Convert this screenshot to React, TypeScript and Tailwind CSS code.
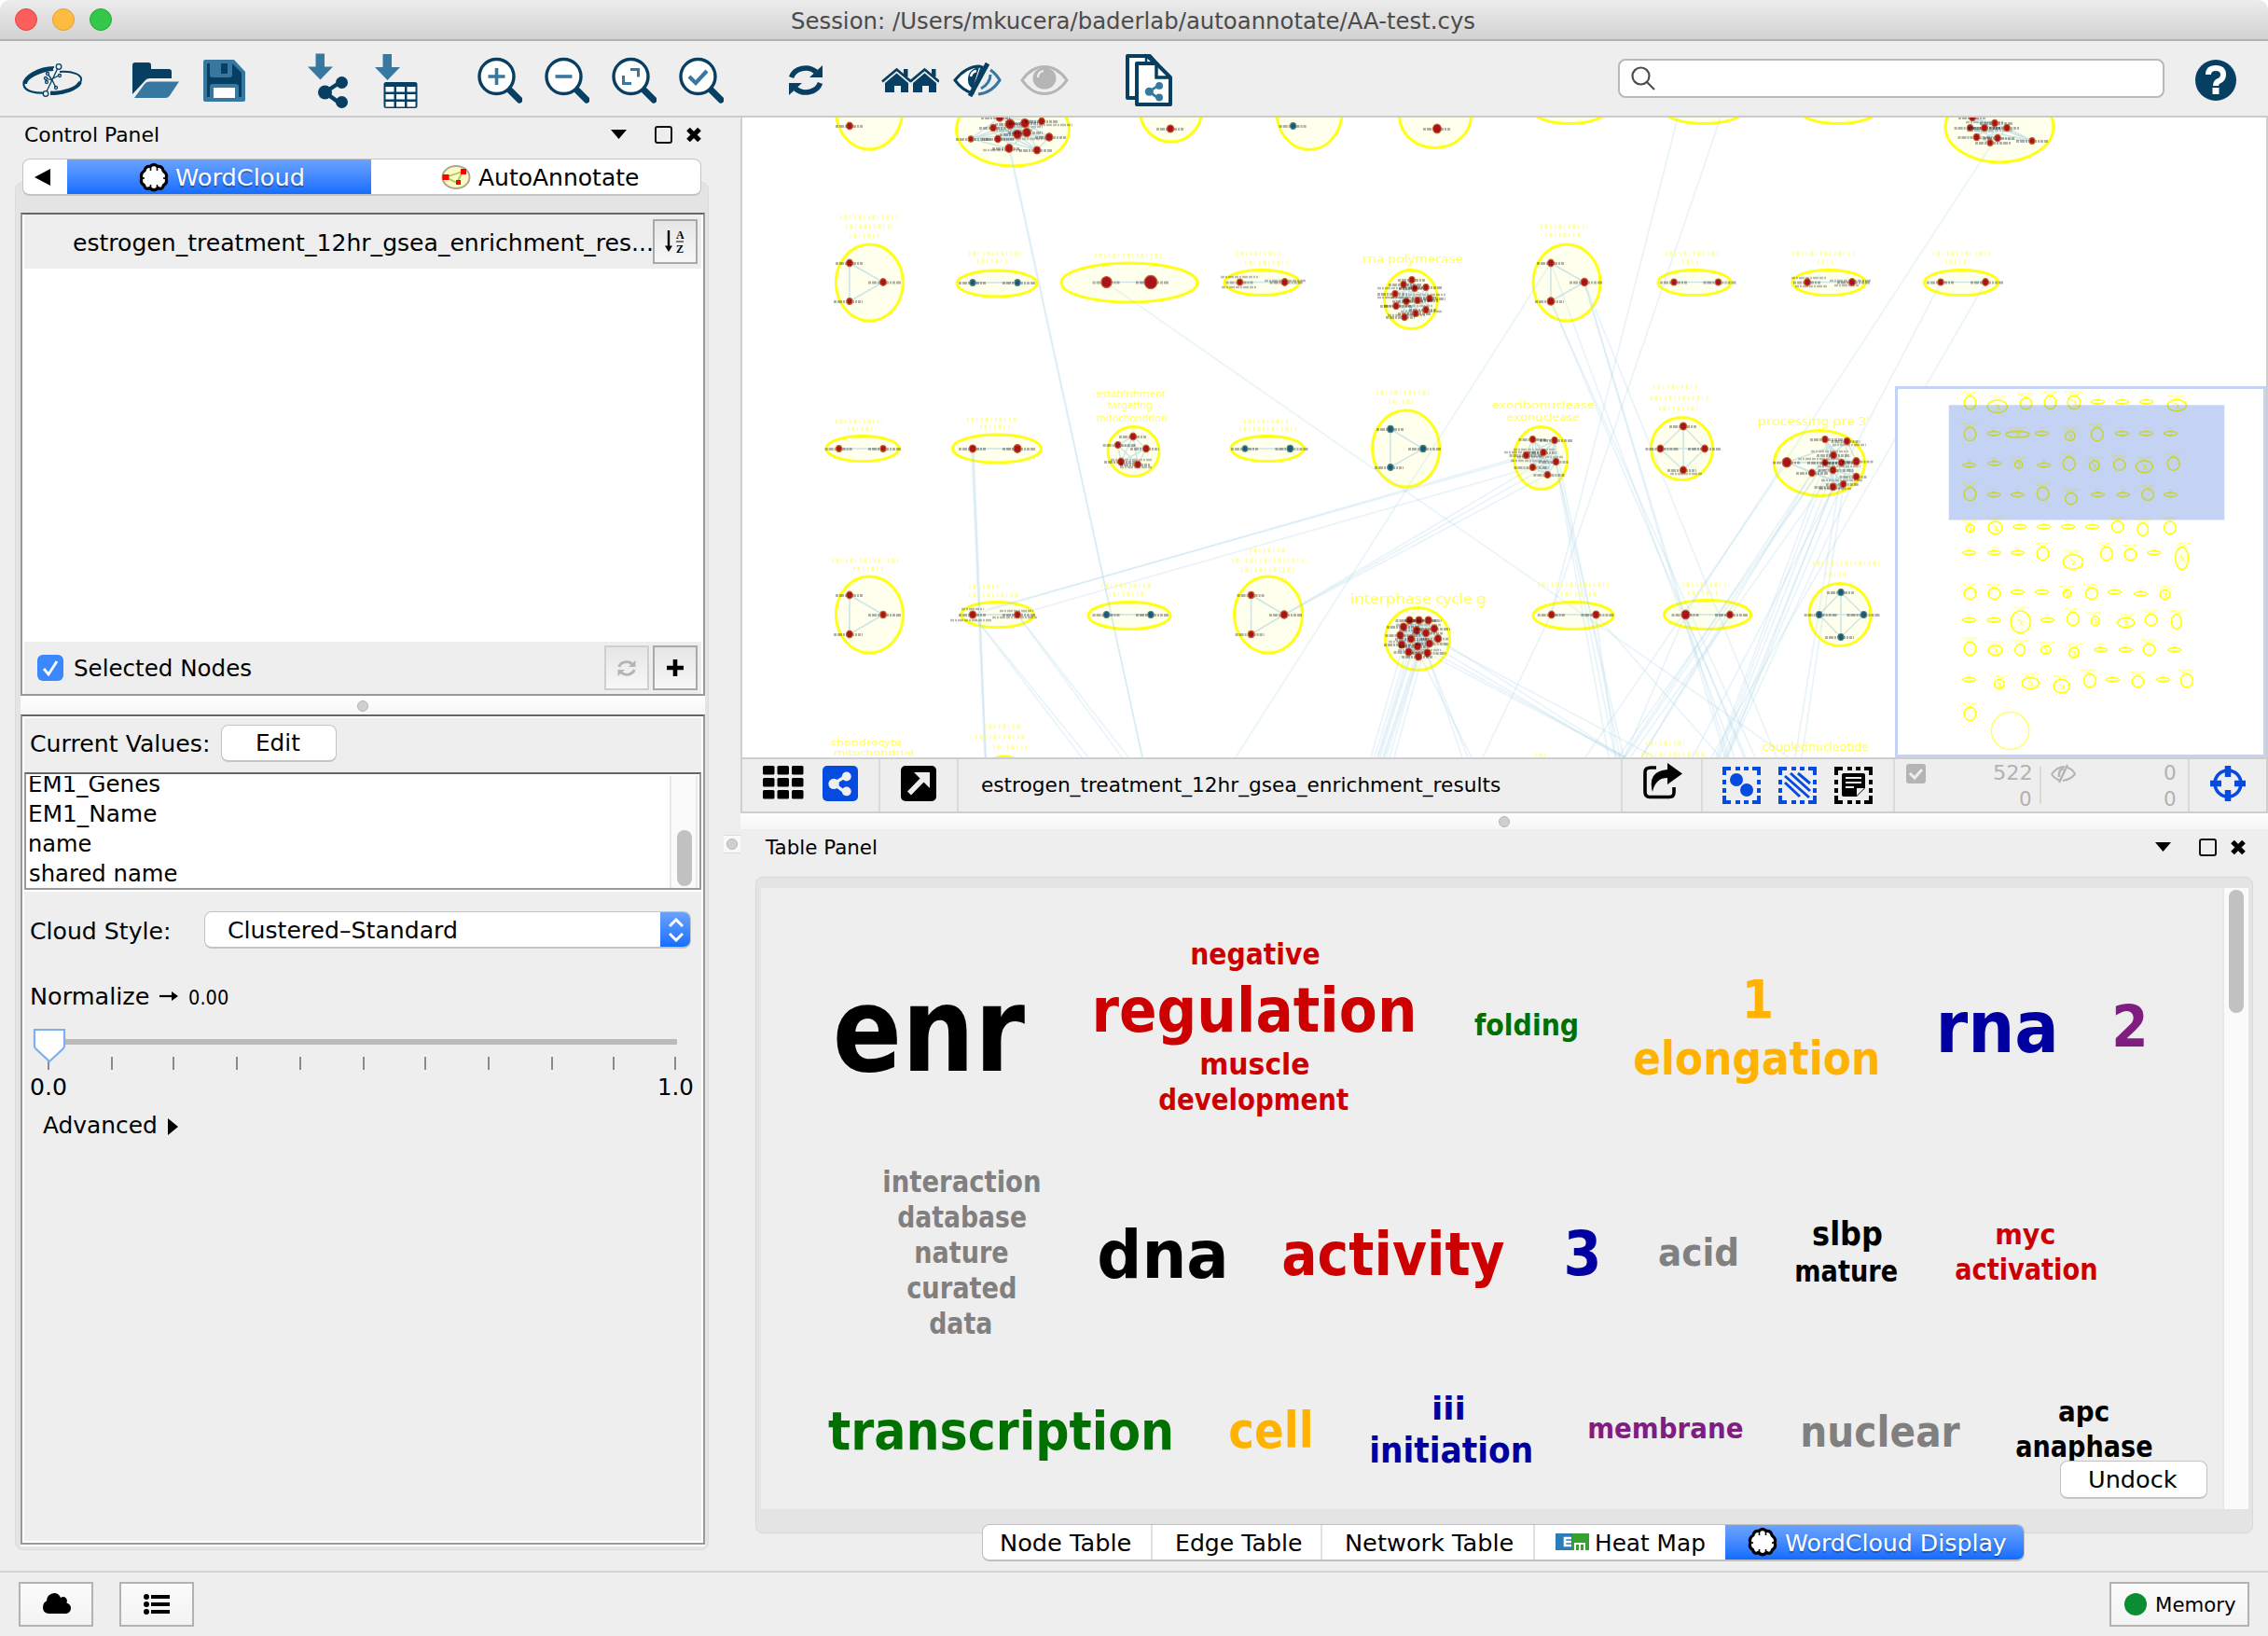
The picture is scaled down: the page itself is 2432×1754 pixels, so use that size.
import React, { useLayoutEffect, useRef } from "react";

const DARK = "#073f62";
const BLUE = "#3878a0";

/* Single line of text whose ink is stretched to exactly w pixels. */
function Fit({ children, w, className = "" }: { children: string; w: number; className?: string }) {
  const ref = useRef<HTMLSpanElement>(null);
  useLayoutEffect(() => {
    const el = ref.current;
    const ctx = document.createElement("canvas").getContext("2d");
    if (!el || !ctx) return;
    const cs = getComputedStyle(el);
    ctx.font = `${cs.fontWeight} ${cs.fontSize} ${cs.fontFamily}`;
    const m = ctx.measureText(children);
    const s = w / (m.actualBoundingBoxLeft + m.actualBoundingBoxRight);
    el.style.transform = `translate(${m.actualBoundingBoxLeft * s}px, 0.042em) scaleX(${s})`;
  }, [children, w]);
  return (
    <span className={`inline-block shrink-0 whitespace-pre ${className}`} style={{ width: w }}>
      <span ref={ref} className="inline-block origin-left">
        {children}
      </span>
    </span>
  );
}

type GProps = { x: number; y: number; w: number; h: number; className?: string; children: React.ReactNode };
function Glyph({ x, y, w, h, className = "", children }: GProps) {
  return (
    <svg viewBox={`${x} ${y} ${w} ${h}`} width={w} height={h} className={`shrink-0 ${className}`} fill="none">
      {children}
    </svg>
  );
}

function Share({ c }: { c: string }) {
  return (
    <g fill={c} stroke={c}>
      <path d="M23 7 L8 17 L23 28" fill="none" strokeWidth="4.5" />
      <circle cx="26" cy="6.5" r="6.5" stroke="none" />
      <circle cx="8" cy="17" r="7.5" stroke="none" />
      <circle cx="26" cy="27.5" r="6.5" stroke="none" />
    </g>
  );
}

function Lens({ className, children }: { className: string; children: React.ReactNode }) {
  return (
    <Glyph x={0} y={0} w={48} h={50} className={className}>
      <path d="M33 34 L45 46" stroke={DARK} strokeWidth="7" strokeLinecap="round" />
      <circle cx="20.5" cy="21" r="18.5" fill="#fff" stroke={DARK} strokeWidth="3.4" />
      <g stroke={BLUE} strokeWidth="3.6">{children}</g>
    </Glyph>
  );
}

function CloudIcon({ className }: { className: string }) {
  return (
    <svg viewBox="0 0 32 32" width="32" height="32" className={`shrink-0 ${className}`}>
      <path
        d="M12 4.500 Q16 0.500 20 4.500 Q25 4 26 9 Q31 13 29 17 Q31 22 26.500 24.500 Q25 30 20.500 27.500 Q16 32 11.500 27.500 Q7 30 5.500 24.500 Q1 22 3 17 Q1 12 6 9 Q7 4 12 4.500Z"
        fill="#fff"
        stroke="#000"
        strokeWidth="3.200"
        strokeLinejoin="round"
      />
      <path d="M12.500 3v6M19.500 3v6M12.500 29v-5M19.500 29v-5M3 17h3M29 17h-3" stroke="#000" strokeWidth="1.600" />
    </svg>
  );
}

function Sync({ c }: { c: string }) {
  return (
    <g stroke={c} strokeWidth="5.6" fill="none">
      <path d="M3.5 15 A16 14 0 0 1 30 9" />
      <path d="M34.500 21 A16 14 0 0 1 8 27" />
      <path d="M37 2 V15 H23Z" fill={c} stroke="none" />
      <path d="M1 34 V21 H15Z" fill={c} stroke="none" />
    </g>
  );
}

function WindowButtons() {
  return (
    <div className="flex items-center">
      <svg width="17" height="10" className="-mt-[1px]">
        <path d="M0 0h17l-8.500 10z" />
      </svg>
      <div className="ml-[30px] h-[19px] w-[19px] rounded-[3px] border-2 border-[#111]" />
      <svg width="18" height="17" viewBox="0 0 18 17" className="ml-[14px]">
        <path d="M3 2.500l12 12M15 2.500l-12 12" stroke="#000" strokeWidth="5.200" />
      </svg>
    </div>
  );
}

function TitleBar() {
  return (
    <div className="relative flex h-[44px] shrink-0 items-center rounded-t-[10px] border-b-2 border-[#b1b1b1] bg-linear-to-b from-[#ececec] to-[#d2d2d2] pl-[16px]">
      <div className="flex gap-[16px]">
        <div className="h-6 w-6 rounded-full border border-[#e2463f] bg-[#fc5f5b]" />
        <div className="h-6 w-6 rounded-full border border-[#dfa035] bg-[#fdbc40]" />
        <div className="h-6 w-6 rounded-full border border-[#27a835] bg-[#34c84a]" />
      </div>
      <Fit w={732} className="ml-[729px] mt-[2px] text-[25px] leading-[44px] text-[#4b4b4b]">
        Session: /Users/mkucera/baderlab/autoannotate/AA-test.cys
      </Fit>
    </div>
  );
}

function Toolbar() {
  return (
    <div className="flex h-[82px] shrink-0 items-start border-b-2 border-[#cbcbcb] bg-[#eeeeee]">
      <Glyph x={24} y={68} w={64} h={36} className="ml-[24px] mt-[24px]">
        <path d="M58 72 C42 72 24 82 25.500 91 C26.500 98 38 100.500 51 99.500" stroke={DARK} strokeWidth="2.2" />
        <path d="M57 74 C42 75 27 83 27 90" stroke={DARK} strokeWidth="4" />
        <path d="M64 77 C78 76 88 80 87 86 C85 94 68 101 54 101" stroke={DARK} strokeWidth="2" />
        <path d="M86 88 C83 95 68 100.500 54 99.500" stroke={DARK} strokeWidth="4" />
        <path d="M62 73 L50 98 M56 86 L49 84 M56 86 L51 79 M56 86 L60 94 M57 84 L63 81" stroke={DARK} strokeWidth="1.300" />
        <g fill="#eee" stroke={DARK} strokeWidth="1.300">
          <circle cx="63" cy="71.500" r="2.800" />
          <circle cx="49" cy="100.500" r="2.800" />
          <circle cx="51" cy="79" r="1.500" />
          <circle cx="49" cy="84" r="1.500" />
          <circle cx="64" cy="81" r="1.500" />
          <circle cx="60" cy="94" r="1.500" />
          <circle cx="50" cy="88" r="1.500" />
        </g>
      </Glyph>
      <Glyph x={142} y={66} w={50} h={40} className="ml-[54px] mt-[22px]">
        <path d="M142 101V70q0-3 3-3h14q3 0 3 3v4h19q3 0 3 3v7h-23q-4 0-6 3z" fill={DARK} />
        <path d="M144 105l11-15q1.500-2.500 5-2.500h32l-10 15q-1.500 2.500-5 2.500z" fill={BLUE} />
      </Glyph>
      <Glyph x={218} y={63} w={46} h={46} className="ml-[26px] mt-[19px]">
        <path d="M220 64h31l12 13v30q0 2-2 2h-41q-2 0-2-2V66q0-2 2-2z" fill={BLUE} />
        <path d="M222 68h3v12q0 3 3 3h18q3 0 3-3v-12l10 10v26h-3V93q0-3-3-3h-25q-3 0-3 3v11h-3z" fill={DARK} />
        <rect x="237" y="68" width="7" height="11" fill={DARK} />
        <rect x="229" y="94" width="23" height="11" fill="#fff" />
      </Glyph>
      <Glyph x={330} y={56} w={46} h={62} className="ml-[66px] mt-[12px]">
        <path d="M338.500 57.500h9.500v14h9l-13.500 14-13.500-14h8.500z" fill={BLUE} />
        <g transform="translate(340.500 82)">
          <Share c={DARK} />
        </g>
      </Glyph>
      <Glyph x={400} y={56} w={48} h={62} className="ml-[24px] mt-[12px]">
        <path d="M410.500 58h9.500v14h9l-13.500 14-13.500-14h8.500z" fill={BLUE} />
        <rect x="411.500" y="88" width="36" height="28" rx="2.500" fill={DARK} />
        <g fill="#fff">
          {[93, 101, 109].map((y) => [413.5, 425, 436.5].map((x) => <rect key={`${x}-${y}`} x={x} y={y} width="9" height="5.500" />))}
        </g>
      </Glyph>
      <Lens className="ml-[64px] mt-[17px]">
        <path d="M20.500 12v18M11.500 21h18" />
      </Lens>
      <Lens className="ml-[24px] mt-[17px]">
        <path d="M11.500 21h18" />
      </Lens>
      <Lens className="ml-[24px] mt-[17px]">
        <path d="M20 13.500h8.500v8M12.500 20v8.500h8.500" strokeWidth="3" />
      </Lens>
      <Lens className="ml-[24px] mt-[17px]">
        <path d="M11 21l7 7 12-13" strokeWidth="4.200" />
      </Lens>
      <Glyph x={0} y={0} w={38} h={36} className="ml-[69px] mt-[24px]">
        <Sync c={DARK} />
      </Glyph>
      <Glyph x={945} y={72} w={62} h={28} className="ml-[62px] mt-[28px]">
        {[0, 30].map((d) => (
          <g key={d} transform={`translate(${d} 0)`}>
            <path d="M946 87.500l15.500-13 15.500 13" stroke={DARK} strokeWidth="2.800" />
            <path d="M949 89l12.500-10.500L974 89v10h-8v-7h-7v7h-10z" fill={DARK} />
            <rect x="969" y="74" width="4.500" height="8" fill={DARK} />
          </g>
        ))}
      </Glyph>
      <Glyph x={1022} y={67} w={52} h={38} className="ml-[15px] mt-[23px]">
        <path d="M1024 86q12-15 26-15l3 1-10 28q-11-3-19-14z" fill="#fff" stroke={DARK} strokeWidth="3" />
        <path d="M1050 72q-12 2-12 14 0 6 5 9z" fill={DARK} />
        <path d="M1047 76q-5 1-6 6" stroke="#fff" strokeWidth="2.500" />
        <path d="M1040 103l19-35" stroke={DARK} strokeWidth="5" />
        <path d="M1062 75q6 4 10 11-9 14-23 15" stroke={BLUE} strokeWidth="3.200" />
        <path d="M1062 80q0 9-10 15" stroke={BLUE} strokeWidth="3" />
      </Glyph>
      <Glyph x={1094} y={68} w={52} h={36} className="ml-[20px] mt-[24px]">
        <path d="M1096 86q10-14.500 24-14.500t24 14.500q-10 14.500-24 14.500t-24-14.500z" stroke="#b5b5b5" strokeWidth="3" />
        <ellipse cx="1120" cy="84" rx="12.500" ry="11.500" fill="#b5b5b5" />
        <path d="M1113 83q0-6 6-7" stroke="#eee" strokeWidth="2.200" />
      </Glyph>
      <Glyph x={1206} y={57} w={52} h={58} className="ml-[60px] mt-[13px]">
        <path d="M1209 60h24l8 9v36h-32z" fill="#fff" stroke={DARK} strokeWidth="4" strokeLinejoin="round" />
        <path d="M1229 60v8h9z" fill="#fff" stroke={DARK} strokeWidth="2.500" />
        <path d="M1219 68h21l15 15v29h-36z" fill="#fff" stroke={DARK} strokeWidth="4" strokeLinejoin="round" />
        <path d="M1240 68v15h15" stroke={DARK} strokeWidth="3.500" />
        <g transform="translate(1227.500 88) scale(.6)">
          <Share c={BLUE} />
        </g>
      </Glyph>
      <div className="ml-[477px] mt-[19px] flex h-[42px] w-[586px] items-center rounded-[8px] border-2 border-[#b8b8b8] bg-white pl-[12px]">
        <svg width="26" height="26" viewBox="0 0 26 26" fill="none" stroke="#4d4d4d" strokeWidth="2.200">
          <circle cx="10.500" cy="10.500" r="9" />
          <path d="M17 17l8 8" />
        </svg>
      </div>
      <div className="ml-[33px] mt-[20px] flex h-[44px] w-[44px] items-center justify-center rounded-full bg-[#073f62]">
        <svg width="24" height="32" viewBox="0 0 24 32" fill="none">
          <path d="M4 10q0-7 8-7t8 7q0 5-5 7-3 1.500-3 5" stroke="#fff" strokeWidth="6" />
          <rect x="8.500" y="24" width="7" height="7" fill="#fff" />
        </svg>
      </div>
    </div>
  );
}

function SquareButton({ className, children }: { className: string; children: React.ReactNode }) {
  return (
    <div className={`flex shrink-0 items-center justify-center border-2 bg-linear-to-b from-[#e6e6e6] to-[#f7f7f7] ${className}`}>
      {children}
    </div>
  );
}

function Grip({ className = "" }: { className?: string }) {
  return <div className={`h-[12px] w-[12px] rounded-full border border-[#b5b5b5] bg-[#cfcfcf] ${className}`} />;
}

const TICKS = [52, 120, 186, 254, 322, 390, 456, 524, 592, 658, 724];

function ControlPanel() {
  return (
    <div className="flex w-[776px] shrink-0 flex-col">
      <div className="flex h-[44px] items-start pl-[27px] pt-[2px]">
        <Fit w={142} className="text-[21.500px] leading-[32px]">
          Control Panel
        </Fit>
        <div className="ml-[486px] mt-[7px]">
          <WindowButtons />
        </div>
      </div>
      <div className="relative z-10 mx-[24px] flex h-[40px] w-[728px] shrink-0 overflow-hidden rounded-[8px] border border-b-2 border-[#c4c4c4] bg-white">
        <div className="flex w-[47px] items-center pl-[12px]">
          <svg width="17" height="18">
            <path d="M17 0v18L0 9z" />
          </svg>
        </div>
        <div className="-my-[2px] flex h-[42px] w-[326px] items-center bg-linear-to-b from-[#6da5fd] to-[#0768fe] pl-[77px]">
          <CloudIcon className="" />
          <Fit w={137} className="ml-[7px] text-[25px] leading-[40px] text-white [text-shadow:0_2px_1px_rgba(0,0,0,0.3)]">
            WordCloud
          </Fit>
        </div>
        <div className="flex items-center pl-[75px]">
          <svg width="32" height="28" viewBox="0 0 32 28">
            <ellipse cx="16" cy="14" rx="14.500" ry="12" fill="#fcf9c6" stroke="#aca88e" strokeWidth="2" />
            <path d="M5 14L23 8L17 20Z" stroke="#9bcf4c" strokeWidth="1.800" fill="none" />
            <rect x="1.500" y="11" width="7" height="6" fill="#f00" />
            <rect x="21" y="5" width="6" height="6" fill="#f00" />
            <rect x="16" y="17" width="5" height="5" fill="#f00" />
          </svg>
          <Fit w={172} className="ml-[8px] text-[25px] leading-[38px]">
            AutoAnnotate
          </Fit>
        </div>
      </div>
      <div className="-mt-[15px] ml-[16px] h-[1467px] w-[744px] shrink-0 rounded-[8px] border border-[#dcdcdc] bg-[#e4e4e4] pl-[5px] pt-[32px]">
        <div className="h-[518px] w-[734px] border-2 border-[#999] border-t-[#666] bg-white px-[2px]">
          <div className="flex h-[58px] items-center bg-[#eeeeee] pl-[53px]">
            <Fit w={620} className="mt-px text-[25px] leading-[40px]">
              estrogen_treatment_12hr_gsea_enrichment_res...
            </Fit>
            <SquareButton className="ml-[1px] h-[48px] w-[48px] border-[#a9a9a9]">
              <svg width="22" height="26" viewBox="0 0 22 26">
                <path d="M4 1v19" stroke="#000" strokeWidth="2.400" />
                <path d="M0 17.500h8L4 24z" />
                <text x="12" y="10" fontSize="12" fontWeight="600" fontFamily="Liberation Serif">A</text>
                <text x="12" y="25" fontSize="12" fontWeight="600" fontFamily="Liberation Serif">Z</text>
                <path d="M12 13h8" stroke="#000" strokeWidth="1" />
              </svg>
            </SquareButton>
          </div>
          <div className="h-[400px]" />
          <div className="flex h-[56px] items-center bg-[#eeeeee] pl-[14px]">
            <div className="flex h-[28px] w-[28px] items-center justify-center rounded-[6px] bg-[#3b88fd]">
              <svg width="18" height="18" viewBox="0 0 18 18">
                <path d="M2 10l5 6L16 2" stroke="#fff" strokeWidth="2.800" fill="none" />
              </svg>
            </div>
            <Fit w={189} className="ml-[12px] text-[25px] leading-[40px]">
              Selected Nodes
            </Fit>
            <SquareButton className="ml-[379px] h-[48px] w-[48px] border-[#cfcfcf]">
              <svg width="20" height="19" viewBox="0 0 38 36">
                <Sync c="#b4b4b4" />
              </svg>
            </SquareButton>
            <SquareButton className="ml-[4px] h-[48px] w-[48px] border-[#a9a9a9]">
              <svg width="18" height="18">
                <path d="M9 0v18M0 9h18" stroke="#000" strokeWidth="4.600" />
              </svg>
            </SquareButton>
          </div>
        </div>
        <div className="flex h-[20px] w-[734px] items-center justify-center bg-linear-to-b from-white to-[#f6f6f6] pt-[2px]">
          <Grip className="" />
        </div>
        <div className="h-[892px] w-[734px] border-b-2 border-white">
          <div className="h-[890px] border-2 border-[#999] border-t-[#666] bg-white p-[2px]">
            <div className="h-[882px] bg-[#eeeeee]">
              <div className="flex h-[58px] items-center pb-[5px] pl-[7px]">
                <Fit w={190} className="text-[25px] leading-[40px]">
                  Current Values:
                </Fit>
                <div className="ml-[14px] flex h-[40px] w-[124px] items-center justify-center rounded-[8px] border border-b-2 border-[#c4c4c4] bg-white">
                  <Fit w={46} className="text-[25px] leading-[36px]">
                    Edit
                  </Fit>
                </div>
              </div>
              <div className="h-[128px] border-b-2 border-white">
                <div className="flex h-[126px] border-2 border-[#999] border-t-[#666] bg-white pt-[2px]">
                  <div className="flex h-[120px] w-[690px] flex-col overflow-hidden pl-[4px]">
                    <Fit w={139} className="-mt-[8px] text-[25px] leading-[32px]">EM1_Genes</Fit>
                    <Fit w={136} className="text-[25px] leading-[32px]">EM1_Name</Fit>
                    <Fit w={66} className="text-[25px] leading-[32px]">name</Fit>
                    <Fit w={158} className="text-[25px] leading-[32px]">shared name</Fit>
                  </div>
                  <div className="h-[120px] w-[30px] border-x-2 border-[#e8e8e8] bg-[#fafafa] pl-[6px] pt-[58px]">
                    <div className="h-[60px] w-[16px] rounded-full bg-[#c1c1c1]" />
                  </div>
                </div>
              </div>
              <div className="mt-[21px] flex h-[40px] items-center pl-[7px]">
                <Fit w={148} className="mt-[2px] text-[25px] leading-[40px]">
                  Cloud Style:
                </Fit>
                <div className="ml-[38px] flex h-[40px] w-[522px] items-center overflow-hidden rounded-[8px] border border-b-2 border-[#c4c4c4] bg-white pl-[25px]">
                  <Fit w={244} className="text-[25px] leading-[36px]">
                    Clustered–Standard
                  </Fit>
                  <div className="ml-[219px] flex h-[42px] w-[34px] shrink-0 items-center justify-center bg-linear-to-b from-[#6da5fd] to-[#0768fe]">
                    <svg width="16" height="26" viewBox="0 0 16 26" fill="none" stroke="#fff" strokeWidth="3">
                      <path d="M1 9l7-7 7 7M1 17l7 7 7-7" />
                    </svg>
                  </div>
                </div>
              </div>
              <div className="mt-[31px] flex h-[40px] items-center pl-[8px]">
                <Fit w={126} className="text-[25px] leading-[40px]">
                  Normalize
                </Fit>
                <svg width="20" height="12" viewBox="0 0 20 12" className="ml-[11px]">
                  <path d="M0 6h14" stroke="#000" strokeWidth="2.200" />
                  <path d="M13 1l7 5-7 5z" />
                </svg>
                <Fit w={41} className="ml-[12px] mt-[2px] text-[21px] leading-[40px]">
                  0.00
                </Fit>
              </div>
              <Glyph x={26} y={1088} w={726} h={61} className="block">
                <rect x="52" y="1114" width="674" height="6" rx="1" fill="#bababa" />
                {TICKS.map((t) => (
                  <path key={t} d={`M${t} 1133v14`} stroke="#8a8a8a" strokeWidth="2" />
                ))}
                <path d="M37 1104h32v17q0 2-1 3l-15 14-15-14q-1-1-1-3z" fill="#fff" stroke="#7db0ea" strokeWidth="2.200" />
              </Glyph>
              <div className="flex h-[32px] justify-between pl-[7px] pr-[9px]">
                <Fit w={38} className="text-[25px] leading-[32px]">0.0</Fit>
                <Fit w={36} className="text-[25px] leading-[32px]">1.0</Fit>
              </div>
              <div className="mt-[9px] flex h-[32px] items-center pl-[20px]">
                <Fit w={121} className="text-[25px] leading-[32px]">
                  Advanced
                </Fit>
                <svg width="11" height="18" className="ml-[13px] mt-[4px]">
                  <path d="M0 0l11 9-11 9z" />
                </svg>
              </div>
            </div>
          </div>
        </div>
      </div>
    </div>
  );
}

/* cx, cy, rx, ry */
const ELLIPSES: number[][] = [
  [932, 119, 35.5, 41], [1086, 139, 60.5, 39], [1255.5, 119, 33, 33], [1404, 120, 35, 40.5], [1539, 124, 38.5, 34.5],
  [1683, 119.5, 38, 13], [1827, 119.5, 41, 13], [1971, 119.5, 40, 13], [2144, 136, 58, 38],
  [932.4, 303, 36, 41], [1069, 304, 43, 14], [1211, 303, 73, 21], [1353, 303, 40, 13.5], [1513, 321, 28.5, 31.5],
  [1680, 303, 36, 41], [1817, 303, 39, 13.5], [1961, 303, 39, 13.5], [2103, 303, 39.5, 13.5],
  [925, 481, 39, 13.5], [1069, 481, 47.5, 15], [1215.5, 484, 27.5, 26.5], [1359, 481, 39, 13.5], [1507.6, 481, 36, 41],
  [1652.3, 491, 28.5, 33.5], [1803.5, 481, 33, 33.5], [1951, 496.5, 48.5, 35],
  [932.4, 659, 36, 41], [1069.5, 659, 39, 13.5], [1211, 660, 44, 14.5], [1360, 659, 36.5, 41], [1520, 685, 34.5, 33.5],
  [1687, 660, 43, 14.5], [1831, 659, 46.5, 15.5], [1973, 659, 33, 33.5], [1077, 824, 20, 13],
];

/* x, y, radius per group; edges join the members of a group */
const RED: number[][][] = [
  [[911, 135, 3.6]],
  [[1065, 137, 3.5], [1083, 133, 5], [1099, 132, 4.5], [1117, 130, 3.5], [1091, 144, 4.5], [1101, 142, 4.5], [1125, 147, 4], [1041, 149, 3], [1070, 149, 3.6], [1082, 159, 4.2], [1112, 161, 3.8], [1072, 126, 4]],
  [[1255, 138, 3.8]],
  [[1541, 138, 4.6]],
  [[2115, 126, 3.5], [2139, 132, 3.5], [2112.6, 137, 3.2], [2128, 137, 3.5], [2152, 137, 3.5], [2119.5, 147, 3.5], [2142, 148, 3.5], [2134, 153, 3.2], [2179, 151, 3.2]],
  [[911, 282, 3.6], [947, 302.5, 3.6], [911, 323, 3.2]],
  [[1186.5, 302.5, 5.8], [1234, 302.5, 7]],
  [[1329.5, 302.5, 3.2], [1377.6, 302.5, 3.6]],
  [[1514, 300, 3.3], [1505, 305, 3.3], [1517, 309, 3.3], [1529, 308, 3.3], [1496, 315, 3.3], [1533, 320, 3.3], [1508, 323, 3.3], [1520, 322, 3.3], [1497, 328, 3.3], [1529, 332, 3.3], [1518, 336, 3.3], [1506, 340, 3.3]],
  [[1663, 282, 3.6], [1699, 302.5, 4], [1663, 323, 4]],
  [[1795, 302.5, 3.3], [1842.5, 302.5, 3.3]],
  [[1938, 302.5, 3.6], [1986, 302.5, 3.6]],
  [[2081, 302.5, 3.3], [2129, 302.5, 3.6]],
  [[899.6, 481, 3.2], [947, 481, 3.2]],
  [[1043, 481, 3.8], [1091, 481, 4.2]],
  [[1215, 468, 3.6], [1198.7, 477, 3.3], [1229, 481, 3.6], [1202, 495, 3.6], [1220, 498, 3.6]],
  [[1643.5, 471, 3.3], [1667, 472, 3.3], [1655, 485, 3.3], [1636.6, 488, 3.5], [1668.5, 495, 3.5], [1643.5, 501, 3.3], [1659.4, 509, 3.3]],
  [[1805, 457, 3.8], [1780.4, 481, 3.6], [1805, 504, 3.6], [1828, 481, 3.6]],
  [[1916, 495.7, 5], [1957, 471, 3.3], [1980.5, 473, 3.5], [1966, 488, 3.6], [1957, 496, 3.3], [1974.6, 496, 3.5], [1990.5, 494.7, 3.8], [1965.6, 504, 3.6], [1943, 507, 3.6], [1990.5, 511, 3.5], [1976.7, 519, 3.3], [1965.6, 522, 3.6]],
  [[911, 638, 3.6], [947, 659, 3.4], [911, 680, 3.6]],
  [[1043, 659, 3.8], [1091, 659, 3.5]],
  [[1341.6, 638, 3.4], [1377, 659, 4], [1341.6, 680, 3.4]],
  [[1511.5, 665, 3.8], [1521.6, 665, 3.8], [1531.7, 665, 3.8], [1505, 672, 3.8], [1519, 675.7, 3.8], [1538, 674, 3.8], [1529, 678.7, 3.8], [1501.5, 681, 3.8], [1513, 685, 3.8], [1542, 684.7, 3.8], [1503, 691, 3.8], [1520, 693, 3.8], [1532.7, 690, 3.8], [1510.5, 699, 3.8], [1530.6, 700, 3.8], [1521, 704, 3.8]],
  [[1663.7, 659, 3.6], [1711.4, 659, 3.8]],
  [[1807.5, 659, 4.6], [1855, 659, 3.6]],
];
const TEAL: number[][][] = [
  [[1386.6, 135, 3.2]],
  [[1043, 303, 3.2], [1091, 303, 3.2]],
  [[1335, 481, 3], [1383.4, 481, 3.4]],
  [[1491, 460, 3.4], [1526, 481, 3.4], [1491, 501, 3.2]],
  [[1186.5, 659, 3.3], [1234, 659, 3.3]],
  [[1974, 635, 3.3], [1950.7, 659, 3.3], [1974, 683, 3.3], [1998.5, 659, 3.3]],
];

/* x-centre, y, width of grey node-label smudges around dense groups */
const SMUDGES: number[][] = [
  [1329, 297, 40], [1329, 308, 38], [1378, 301, 44], [1940, 298, 38], [1942, 307, 34], [1984, 301, 44], [1980, 306, 26],
  [1043, 653, 24], [1041, 665, 44], [1090, 655, 36], [1088, 662, 48],
  [1500, 309, 46], [1530, 316, 40], [1494, 319, 34], [1516, 319, 50], [1510, 328, 52], [1524, 334, 44], [1508, 338, 40],
  [1645, 482, 44], [1652, 490, 50], [1640, 494, 40], [1636, 485, 46],
  [1950, 492, 44], [1972, 500, 46], [1962, 484, 40], [1975, 515, 44], [1968, 524, 34], [1983, 477, 36],
  [1085, 140, 44], [1094, 149, 56], [1074, 161, 40], [1100, 136, 36], [1132, 134, 36], [2134, 140, 50], [2128, 131, 40],
  [1808, 508, 34], [1213, 493, 44], [1218, 501, 34], [1521, 670, 48], [1514, 688, 50], [1522, 697, 46],
];

/* x1, y1, x2, y2 of the edges that run between groups */
const LINKS: number[][] = [
  [1082, 159, 1225, 812], [1083, 159, 1225, 812], [1186, 303, 1918, 812], [1043, 481, 1057, 812], [1044, 481, 1057, 812], [1042, 481, 1056, 812],
  [1663, 282, 1325, 812], [1636, 488, 1043, 659], [1643, 501, 1091, 659], [1655, 485, 1060, 653],
  [1643, 501, 1377, 659], [1659, 509, 1377, 659], [1668, 495, 1377, 659], [1799, 126, 1663, 659], [1845, 126, 1663, 659],
  [2139, 150, 1807, 659], [2081, 303, 1815, 812], [2129, 303, 1835, 812], [1663, 323, 1882, 812], [1663, 323, 1872, 812],
  [1663, 282, 1860, 812], [1699, 303, 1850, 812], [1699, 303, 1853, 812], [1699, 303, 1905, 812], [1668, 495, 1725, 812],
  [1669, 495, 1732, 812], [1667, 472, 1737, 812], [1668, 495, 1741, 812], [1943, 507, 1741, 812], [1957, 496, 1735, 812],
  [1957, 496, 1743, 812], [1966, 504, 1748, 812], [1966, 504, 1844, 812], [1975, 519, 1850, 812], [1957, 496, 1840, 812],
  [1966, 522, 1848, 812], [1975, 496, 1852, 812], [1990, 511, 1852, 812], [1965, 488, 1842, 812], [1916, 496, 1700, 812],
  [1943, 507, 1760, 812], [1972, 520, 1950, 659], [1977, 519, 1956, 659], [1950, 659, 1925, 812], [1955, 659, 1932, 812],
  [1505, 691, 1470, 812], [1508, 699, 1474, 812], [1511, 699, 1477, 812], [1514, 700, 1480, 812], [1518, 704, 1483, 812],
  [1521, 704, 1486, 812], [1521, 704, 1490, 812], [1525, 704, 1495, 812], [1521, 700, 1484, 812], [1513, 700, 1478, 812],
  [1530, 700, 1568, 812], [1530, 700, 1574, 812], [1521, 700, 1578, 812], [1530, 700, 1743, 812], [1538, 700, 1743, 812],
  [1542, 685, 1741, 812], [1533, 690, 1738, 812], [1545, 690, 1775, 812], [1043, 659, 1160, 812],
  [1043, 659, 1167, 812], [1091, 659, 1203, 812], [1091, 659, 1210, 812], [1663, 659, 1590, 812], [1711, 659, 1733, 812],
  [1711, 659, 1845, 812], [1807, 659, 1742, 812], [1807, 659, 1870, 812], [1855, 659, 1760, 812],
];

/* x-centre, y, width of captions that are too small to read */
const FAINT: number[][] = [
  [932, 233, 62], [932, 243, 50], [928, 253, 34], [1067, 272, 56], [1065, 280, 34], [1211, 274, 74], [1351, 272, 50], [1358, 282, 46],
  [1677, 243, 50], [1677, 252, 40], [1814, 272, 56], [1814, 281, 20], [1955, 272, 66], [1957, 281, 16], [2104, 272, 62], [2099, 281, 26],
  [921, 452, 50], [924, 460, 30], [1063, 450, 52], [1068, 458, 34], [1358, 452, 48], [1360, 460, 62], [1506, 421, 60], [1504, 431, 30],
  [1797, 415, 48], [1802, 427, 64], [1801, 438, 44], [929, 601, 74], [932, 610, 34], [1056, 629, 34], [1066, 638, 54], [1208, 628, 54],
  [1209, 637, 40], [1359, 590, 38], [1361, 601, 80], [1361, 611, 60], [1687, 627, 76], [1694, 637, 40], [1829, 627, 50], [1827, 636, 34],
  [1981, 604, 74], [1968, 616, 22], [1075, 779, 38], [1073, 790, 54], [1083, 801, 36], [1786, 797, 42], [1795, 809, 70], [1653, 810, 14],
];

const CAPTIONS: [string, number, number, number, number][] = [
  ["rna polymerase", 1461, 282, 108, 13],
  ["establishment", 1176, 426, 74, 10],
  ["targeting", 1188, 438, 48, 10],
  ["mitochondrion", 1176, 452, 76, 10],
  ["exoribonuclease", 1600, 438, 110, 11],
  ["exonuclease", 1616, 451, 78, 11],
  ["processing pre 3'", 1885, 456, 120, 13],
  ["interphase cycle g", 1448, 647, 146, 14],
  ["chondrocyte", 891, 799, 76, 9],
  ["mitochondrial", 894, 810, 86, 9],
  ["couplednucleotide", 1890, 805, 114, 12],
];

function GroupEdges({ g }: { g: number[][] }) {
  let d = "";
  g.forEach((a, i) => g.forEach((b, j) => {
    if (j > i && (g.length < 8 || (i + j) % 2 === 0)) d += `M${a[0]} ${a[1]}L${b[0]} ${b[1]}`;
  }));
  return <path d={d} stroke="#9ccbe0" strokeOpacity="0.5" strokeWidth="1.500" fill="none" />;
}

function Nodes({ groups, fill, rim }: { groups: number[][][]; fill: string; rim: string }) {
  return (
    <>
      {groups.map((g, i) => (
        <g key={i}>
          <GroupEdges g={g} />
          {g.map(([x, y, r], k) => (
            <g key={k}>
              <path
                d={`M${x - 15 - ((k * 7) % 6)} ${y + 0.5}h${30 + ((k * 5) % 9)}`}
                stroke="#000"
                strokeOpacity="0.300"
                strokeWidth="2.800"
                strokeDasharray="3 1 5 1 2 1"
              />
              <ellipse cx={x} cy={y} rx={r - 0.2} ry={r + 0.2} fill={fill} stroke={rim} strokeWidth="1.200" />
            </g>
          ))}
        </g>
      ))}
    </>
  );
}

/* Overview shapes: pills are two-node groups at x, y; ovals are x, y, rx, ry */
const PILLS: number[][] = [
  [1224, 86], [1273, 86], [1322, 86], [1014, 181], [1111, 181], [1273, 181], [1322, 181], [1371, 181], [964, 276], [1015, 271], [1115, 276],
  [1014, 365], [1062, 365], [1224, 365], [1275, 365], [1371, 365], [1066, 461], [1115, 461], [1164, 461], [1213, 461],
  [964, 539], [1015, 539], [1062, 539], [1338, 539], [1062, 657], [1111, 657], [1258, 657], [1311, 662], [964, 741], [1014, 741], [1122, 741],
  [1230, 830], [1280, 830], [1379, 830], [964, 920], [1254, 920], [1356, 920],
];
const OVALS: number[][] = [
  [966, 89, 12, 20], [1021, 100, 20, 19], [1079, 91, 12, 17], [1128, 88, 12, 20], [1176, 88, 13, 20], [1384, 97, 19, 17],
  [966, 183, 12, 20], [1062, 184, 24, 9], [1168, 189, 10, 14], [1223, 184, 12, 20], [1064, 275, 8, 11], [1166, 272, 12, 20],
  [1217, 278, 10, 15], [1268, 275, 12, 17], [1318, 281, 17, 18], [1377, 272, 12, 20], [966, 363, 12, 20], [1113, 362, 12, 20],
  [1170, 377, 12, 17], [1325, 365, 12, 17], [966, 466, 8, 11], [1017, 464, 14, 19], [1264, 461, 12, 17], [1315, 469, 11, 19],
  [1370, 464, 12, 19], [1113, 542, 12, 20], [1174, 567, 20, 22], [1242, 542, 12, 20], [1290, 545, 12, 17], [1394, 556, 13, 34],
  [966, 662, 12, 17], [1015, 662, 12, 17], [1162, 662, 8, 11], [1212, 662, 12, 17], [1360, 665, 10, 14], [1068, 747, 20, 33],
  [1174, 738, 12, 20], [1219, 744, 8, 14], [1281, 749, 17, 14], [1332, 741, 12, 17], [1383, 746, 10, 22], [966, 827, 12, 20],
  [1017, 832, 14, 15], [1067, 831, 10, 17], [1119, 831, 10, 12], [1176, 839, 10, 15], [1328, 830, 12, 17], [1025, 934, 10, 14],
  [1088, 931, 17, 17], [1151, 940, 16, 20], [1208, 923, 12, 20], [1305, 926, 12, 17], [1404, 923, 12, 20], [966, 1023, 12, 20],
];

function Overview() {
  return (
    <svg viewBox="819.8 47.6 738.8 1097.6" preserveAspectRatio="none" className="absolute right-0 bottom-0 h-[398px] w-[398px] border-[3px] border-[#c3d3f4] bg-white" fill="none">
      <g stroke="#ffff00" strokeWidth="1.500">
        {PILLS.map(([x, y], i) => (
          <g key={i}>
            <ellipse cx={x} cy={y} rx="13" ry="5" vectorEffect="non-scaling-stroke" />
            <path d={`M${x - 4} ${y - 7}h8M${x - 4} ${y + 7}h8`} vectorEffect="non-scaling-stroke" />
            <path d={`M${x - 5} ${y - 15}h10`} strokeOpacity="0.6" strokeDasharray="1 1" vectorEffect="non-scaling-stroke" />
          </g>
        ))}
        {OVALS.map(([x, y, rx, ry], i) => (
          <g key={i}>
            <ellipse cx={x} cy={y} rx={rx} ry={ry} fill="#ffff00" fillOpacity="0.060" vectorEffect="non-scaling-stroke" />
            <path d={`M${x - 17} ${y - ry - 11}h34M${x - 10} ${y - ry - 5}h20`} strokeOpacity="0.6" strokeDasharray="1 1.500" vectorEffect="non-scaling-stroke" />
            {rx > 12 || ry < 17 ? (
              <path d={`M${x - 4} ${y - 6}l8 5-4 7 7 3`} strokeDasharray="1.500 1" strokeOpacity="0.8" vectorEffect="non-scaling-stroke" />
            ) : null}
          </g>
        ))}
        <ellipse cx="1047" cy="1074" rx="38" ry="56" strokeOpacity="0.6" vectorEffect="non-scaling-stroke" />
      </g>
      <rect x="923" y="96" width="557" height="345" fill="#2b62d9" fillOpacity="0.280" />
    </svg>
  );
}

function NetworkCanvas() {
  return (
    <div className="relative h-[686px] overflow-hidden bg-white">
      <svg viewBox="796 126 1634 686" width="1634" height="686" className="block" fill="none">
        {ELLIPSES.map(([cx, cy, rx, ry], i) => (
          <ellipse key={i} cx={cx} cy={cy} rx={rx} ry={ry} fill="#ffffee" stroke="#ffff14" strokeWidth="3" />
        ))}
        <g stroke="#a9d3e6" strokeOpacity="0.250" strokeWidth="1.700">
          {LINKS.map(([a, b, c, d], i) => (
            <path key={i} d={`M${a} ${b}L${c} ${d}`} />
          ))}
        </g>
        <g stroke="#ffff40" strokeOpacity="0.500" strokeWidth="5" strokeDasharray="1.500 3 3 2.500 1 4">
          {FAINT.map(([x, y, w], i) => (
            <path key={i} d={`M${x - w / 2} ${y}h${w}`} />
          ))}
        </g>
        <g fill="#ffff30" fillOpacity="0.800" fontFamily="Noto Sans, sans-serif">
          {CAPTIONS.map(([t, x, y, w, s]) => (
            <text key={t} x={x} y={y} fontSize={s} textLength={w} lengthAdjust="spacingAndGlyphs">
              {t}
            </text>
          ))}
        </g>
        <g stroke="#000" strokeOpacity="0.260" strokeWidth="2.600" strokeDasharray="4 1 2 1 6 1">
          {SMUDGES.map(([x, y, w], i) => (
            <path key={i} d={`M${x - w / 2} ${y}h${w}`} />
          ))}
        </g>
        <Nodes groups={RED} fill="#a8141c" rim="#c4622c" />
        <Nodes groups={TEAL} fill="#1c5580" rim="#4f8a72" />
      </svg>
      <Overview />
    </div>
  );
}

function DashBox({ c, className, children }: { c: string; className: string; children: React.ReactNode }) {
  return (
    <svg width="41" height="40" viewBox="0 0 41 40" className={`shrink-0 ${className}`} fill="none">
      <path d="M2 9V2H9M14 2h5M23 2h5M32 2h7V9M39 14v5M39 23v5M39 31v7H32M28 38h-5M19 38h-5M9 38H2V31M2 28v-5M2 19v-5" stroke={c} strokeWidth="4" />
      {children}
    </svg>
  );
}

function NetworkBar() {
  return (
    <div className="flex h-[60px] border-y-2 border-[#cecece] bg-[#eeeeee]">
      <div className="flex w-[148px] border-r-2 border-[#dadada] pl-[22px] pt-[7px]">
        <svg width="44" height="36">
          {[0, 13, 26].map((y) => [0, 15.5, 31].map((x) => <rect key={`${x}-${y}`} x={x} y={y} width="12.500" height="9.500" rx="1.500" />))}
        </svg>
        <svg width="38" height="38" viewBox="0 0 38 38" className="ml-[20px]">
          <rect width="38" height="38" rx="5" fill="#064be0" />
          <g transform="translate(6 6.500) scale(.76)">
            <Share c="#eee" />
          </g>
        </svg>
      </div>
      <div className="flex w-[84px] border-r-2 border-[#dadada] pl-[22px] pt-[7px]">
        <svg width="38" height="38" viewBox="0 0 38 38">
          <rect width="38" height="38" rx="5" />
          <path d="M9 29.500L25 13" stroke="#eee" strokeWidth="5.500" />
          <path d="M14 7h17v17z" fill="#eee" />
        </svg>
      </div>
      <div className="flex w-[712px] border-r-2 border-[#dadada] pl-[25px] pt-[7px]">
        <Fit w={556} className="text-[21.500px] leading-[40px]">
          estrogen_treatment_12hr_gsea_enrichment_results
        </Fit>
      </div>
      <div className="w-[86px] border-r-2 border-[#dadada] pl-[22px] pt-[4px]">
        <svg width="42" height="39" viewBox="0 0 42 39">
          <path d="M14 5H8Q2 5 2 10v21q0 5.500 5 5.500h21q5 0 5-5V26" stroke="#000" strokeWidth="3.600" fill="none" />
          <path d="M26 0L42 11.500L26 23V16Q13 16 10 31Q4 9 26 7z" />
        </svg>
      </div>
      <div className="flex w-[206px] border-r-2 border-[#dadada] pl-[21px] pt-[8px]">
        <DashBox c="#064be0" className="">
          <circle cx="15" cy="14" r="7" fill="#064be0" />
          <circle cx="26" cy="25" r="7" fill="#064be0" />
        </DashBox>
        <DashBox c="#064be0" className="ml-[19px]">
          <path d="M7 17l16 15M7 10l26 23M13 7l21 19M21 7l13 11" stroke="#064be0" strokeWidth="3" />
        </DashBox>
        <DashBox c="#000" className="ml-[19px]">
          <path d="M10 7h21q2 0 2 2v14l-9 9H10q-2 0-2-2V9q0-2 2-2z" fill="#000" />
          <path d="M12 12h17M12 17h17M12 22h9" stroke="#eee" strokeWidth="2.200" />
          <path d="M24 31v-8h8z" fill="#eee" />
        </DashBox>
      </div>
      <div className="flex w-[316px] border-r-2 border-[#dadada] pl-[12px] text-[21.500px] leading-[28px] text-[#b2b2b2]">
        <svg width="21" height="21" viewBox="0 0 21 21" className="mt-[5px]">
          <rect width="21" height="21" rx="3" fill="#b4b4b4" />
          <path d="M4 10l5 5 8-9" stroke="#eee" strokeWidth="3" fill="none" />
        </svg>
        <div className="flex w-[113px] flex-col items-end">
          <Fit w={40} className="">522</Fit>
          <Fit w={12} className="">0</Fit>
        </div>
        <div className="ml-[9px] mt-[8px] h-[40px] w-[2px] bg-[#dadada]" />
        <svg width="29" height="21" viewBox="0 0 29 21" className="ml-[9px] mt-[5px]" fill="none" stroke="#b4b4b4">
          <path d="M2 11Q8 3 16 3M12 18Q5 16 2 11M19 4q6 2 8 7-5 6-13 7" strokeWidth="2" />
          <path d="M10 20L19 1M15 5q-6 1-5 9" strokeWidth="2.400" />
        </svg>
        <div className="ml-[94px] flex flex-col">
          <Fit w={12} className="">0</Fit>
          <Fit w={12} className="">0</Fit>
        </div>
      </div>
      <svg width="38" height="38" viewBox="0 0 38 38" className="ml-[22px] mt-[7px]" fill="none" stroke="#064be0">
        <circle cx="19" cy="19" r="14" strokeWidth="3.600" />
        <path d="M19 0v12M19 26v12M0 19h12M26 19h12" strokeWidth="6.500" />
      </svg>
    </div>
  );
}

/* word, ink x, baseline y, ink width, font size, colour */
const WORDS: [string, number, number, number, number, string][] = [
  ["enr", 897, 1148, 202.5, 127, "text-black"],
  ["negative", 1277.5, 1034, 137, 32, "text-[#cc0000]"],
  ["regulation", 1175, 1105.7, 340, 66, "text-[#cc0000]"],
  ["muscle", 1288, 1151.7, 116, 32, "text-[#cc0000]"],
  ["development", 1242.5, 1190, 203, 32, "text-[#cc0000]"],
  ["folding", 1580.5, 1110, 110.5, 32, "text-[#007100]"],
  ["1", 1872.5, 1092, 26, 57, "text-[#ffb300]"],
  ["elongation", 1753, 1152, 260, 50, "text-[#ffb300]"],
  ["rna", 2081, 1128, 122, 76, "text-[#0000a0]"],
  ["2", 2268, 1122, 31, 62, "text-[#7f1d80]"],
  ["interaction", 947.5, 1278, 167, 32, "text-[#808080]"],
  ["database", 963, 1316, 137.5, 32, "text-[#808080]"],
  ["nature", 981.5, 1354, 99, 32, "text-[#808080]"],
  ["curated", 972.5, 1392, 116, 32, "text-[#808080]"],
  ["data", 996.5, 1430, 66, 32, "text-[#808080]"],
  ["dna", 1179, 1369.7, 133.5, 72, "text-black"],
  ["activity", 1376, 1366, 237, 64, "text-[#cc0000]"],
  ["3", 1680, 1367.5, 33, 66, "text-[#0000a0]"],
  ["acid", 1779, 1357.3, 83, 41, "text-[#808080]"],
  ["slbp", 1944, 1336, 74, 35, "text-black"],
  ["mature", 1926, 1373.7, 108.5, 32, "text-black"],
  ["myc", 2141, 1333.7, 62, 31, "text-[#cc0000]"],
  ["activation", 2097, 1372, 151, 32, "text-[#cc0000]"],
  ["transcription", 888, 1554, 368, 57, "text-[#007100]"],
  ["cell", 1319, 1552, 86, 53, "text-[#ffb300]"],
  ["iii", 1537, 1521.7, 32, 34, "text-[#0000a0]"],
  ["initiation", 1470.5, 1567.7, 171, 37, "text-[#0000a0]"],
  ["membrane", 1704, 1541.7, 164.5, 31, "text-[#7f1d80]"],
  ["nuclear", 1932.5, 1550, 169, 46, "text-[#808080]"],
  ["apc", 2208, 1524, 53, 31, "text-black"],
  ["anaphase", 2162, 1562, 146, 32, "text-black"],
];

function WordCanvas() {
  return (
    <div className="relative h-[666px] w-[1567px] overflow-hidden bg-[#eeeeee]">
      {WORDS.map(([t, x, y, w, s, c]) => (
        <div
          key={t}
          className="absolute leading-none font-bold"
          style={{ left: x - 816, top: y - 951.5 - s * 0.888, height: s, fontSize: s }}
        >
          <Fit w={w} className={c}>
            {t}
          </Fit>
        </div>
      ))}
      <div className="absolute right-[16px] bottom-[11px] flex h-[41px] w-[158px] items-center justify-center rounded-[8px] border border-b-2 border-[#c4c4c4] bg-white">
        <Fit w={94} className="text-[25px] leading-[36px]">
          Undock
        </Fit>
      </div>
    </div>
  );
}

function TablePanel() {
  return (
    <div className="flex flex-1 flex-col">
      <div className="flex h-[51px] pl-[26px] pt-[3px]">
        <Fit w={119} className="text-[21.500px] leading-[32px]">
          Table Panel
        </Fit>
        <div className="ml-[1372px] mt-[7px]">
          <WindowButtons />
        </div>
      </div>
      <div className="ml-[16px] flex h-[704px] w-[1606px] shrink-0 rounded-[8px] border border-[#d8d8d8] bg-[#e4e4e4] pl-[5px] pt-[11px]">
        <WordCanvas />
        <div className="h-[666px] w-[28px] border-l-2 border-[#e7e7e7] bg-[#fafafa] pl-[5px] pt-[2px]">
          <div className="h-[132px] w-[16px] rounded-full bg-[#c1c1c1]" />
        </div>
      </div>
      <div className="relative z-10 -mt-[10px] ml-[259px] flex h-[40px] w-[1118px] overflow-hidden rounded-[8px] border border-b-2 border-[#c0c0c0] bg-white text-[25px] leading-[37px]">
        <div className="w-[182px] border-r-2 border-[#e2e2e2] pl-[20px]">
          <Fit w={139}>Node Table</Fit>
        </div>
        <div className="w-[182px] border-r-2 border-[#e2e2e2] pl-[26px]">
          <Fit w={134}>Edge Table</Fit>
        </div>
        <div className="w-[228px] border-r-2 border-[#e2e2e2] pl-[26px]">
          <Fit w={179}>Network Table</Fit>
        </div>
        <div className="flex w-[204px] pl-[22px]">
          <svg width="36" height="18" className="mt-[9px]">
            <rect width="18" height="18" fill="#2a7db8" />
            <rect x="18" width="18" height="18" fill="#37a12f" />
            <path d="M17 5h-7v8h7M10 9h7" stroke="#fff" strokeWidth="2.600" fill="none" />
            <path d="M21 18v-7h10v7M26 11v7" stroke="#fff" strokeWidth="2" fill="none" />
          </svg>
          <Fit w={116} className="ml-[8px]">
            Heat Map
          </Fit>
        </div>
        <div className="-mt-[1px] flex h-[40px] flex-1 bg-linear-to-b from-[#6da5fd] to-[#0768fe] pt-[1px] pl-[24px]">
          <CloudIcon className="mt-[2px]" />
          <Fit w={238} className="ml-[8px] text-white [text-shadow:0_2px_1px_rgba(0,0,0,0.3)]">
            WordCloud Display
          </Fit>
        </div>
      </div>
    </div>
  );
}

function StatusBar() {
  return (
    <div className="flex h-[70px] shrink-0 items-start border-t-2 border-[#d4d4d4] bg-[#eeeeee] pt-[10px] pl-[20px]">
      <div className="flex h-[48px] w-[80px] items-center justify-center border-2 border-[#b2b2b2] bg-linear-to-b from-[#fbfbfb] to-[#f3f3f3]">
        <svg width="30" height="22" viewBox="0 0 30 22" className="ml-[2px] -mt-[3px]">
          <path d="M6 22Q0 21 0 15.500Q0 10 4 8.500Q4 1 12 0Q17 0 19 5Q22 3 25 5.500Q26.500 7.500 25.500 10.500Q30 12 30 16Q30 21 25 22z" />
        </svg>
      </div>
      <div className="ml-[28px] flex h-[48px] w-[80px] items-center justify-center border-2 border-[#b2b2b2] bg-linear-to-b from-[#fbfbfb] to-[#f3f3f3]">
        <svg width="28" height="22">
          {[3, 11, 19].map((y) => (
            <g key={y}>
              <circle cx="3" cy={y} r="3" />
              <rect x="8" y={y - 2} width="20" height="4" />
            </g>
          ))}
        </svg>
      </div>
      <div className="ml-[2054px] flex h-[48px] w-[150px] items-center border-2 border-[#b2b2b2] bg-linear-to-b from-[#fbfbfb] to-[#f3f3f3] pl-[14px]">
        <div className="h-[24px] w-[24px] rounded-full bg-[#0b8d33]" />
        <Fit w={85} className="ml-[11px] text-[21.500px] leading-[40px]">
          Memory
        </Fit>
      </div>
    </div>
  );
}

export default function App() {
  return (
    <div className="flex h-[1754px] w-[2432px] flex-col overflow-hidden bg-white font-['DejaVu_Sans','Noto_Sans',sans-serif] text-black">
      <TitleBar />
      <Toolbar />
      <div className="flex h-[1558px] shrink-0 bg-[#eeeeee]">
        <ControlPanel />
        <div className="flex w-[18px] flex-col pt-[769px]">
          <div className="flex h-[20px] items-center justify-center border-y border-[#dcdcdc] bg-[#f8f8f8]">
            <Grip />
          </div>
        </div>
        <div className="flex w-[1638px] flex-col">
          <div className="border-x-2 border-[#cecece]">
            <NetworkCanvas />
            <NetworkBar />
          </div>
          <div className="flex h-[17px] items-center justify-center bg-linear-to-b from-[#fdfdfd] to-[#f6f6f6]">
            <Grip />
          </div>
          <TablePanel />
        </div>
      </div>
      <StatusBar />
    </div>
  );
}
